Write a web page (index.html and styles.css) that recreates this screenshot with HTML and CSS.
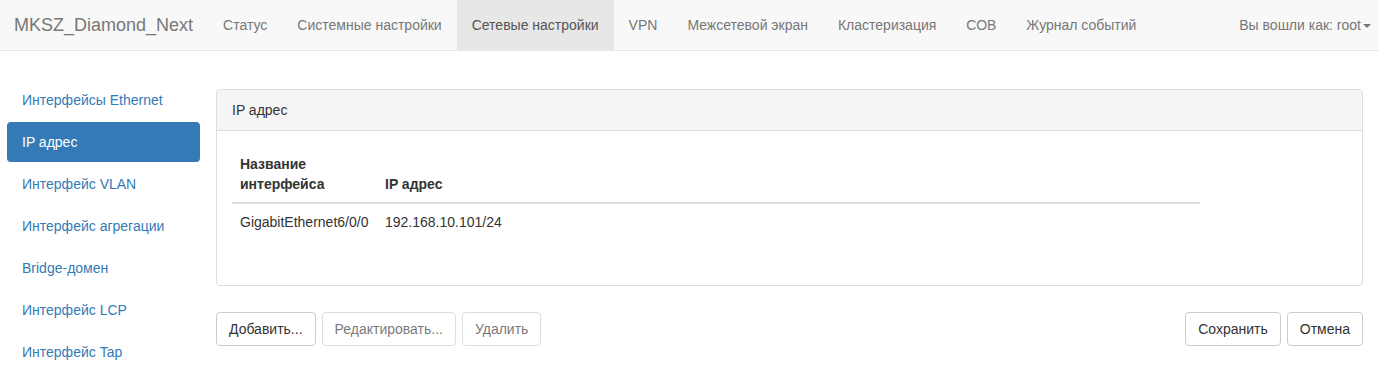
FILE: index.html
```html
<!DOCTYPE html>
<html lang="ru">
<head>
    <meta charset="UTF-8">
    <title>MKSZ_Diamond_Next</title>
    <link rel="stylesheet" href="styles.css">
</head>
<body>
    <nav class="navbar">
        <a class="brand" href="#">MKSZ_Diamond_Next</a>
        <ul class="nav-menu">
            <li><a href="#">Статус</a></li>
            <li><a href="#">Системные настройки</a></li>
            <li class="active"><a href="#">Сетевые настройки</a></li>
            <li><a href="#">VPN</a></li>
            <li><a href="#">Межсетевой экран</a></li>
            <li><a href="#">Кластеризация</a></li>
            <li><a href="#">СОВ</a></li>
            <li><a href="#">Журнал событий</a></li>
        </ul>
        <div class="nav-user">
            <a href="#">Вы вошли как: root<span class="caret"></span></a>
        </div>
    </nav>

    <div class="main">
        <!-- боковое меню -->
        <ul class="side-nav">
            <li><a href="#">Интерфейсы Ethernet</a></li>
            <li class="active"><a href="#">IP адрес</a></li>
            <li><a href="#">Интерфейс VLAN</a></li>
            <li><a href="#">Интерфейс агрегации</a></li>
            <li><a href="#">Bridge-домен</a></li>
            <li><a href="#">Интерфейс LCP</a></li>
            <li><a href="#">Интерфейс Tap</a></li>
        </ul>

        <div class="content">
            <div class="panel">
                <div class="panel-heading">IP адрес</div>
                <div class="panel-body">
                    <table class="table">
                        <thead>
                            <tr>
                                <th class="col-name">Название интерфейса</th>
                                <th class="col-ip">IP адрес</th>
                                <th></th>
                            </tr>
                        </thead>
                        <tbody>
                            <tr>
                                <td>GigabitEthernet6/0/0</td>
                                <td>192.168.10.101/24</td>
                                <td></td>
                            </tr>
                        </tbody>
                    </table>
                </div>
            </div>

            <div class="actions">
                <div class="btn-group">
                    <button class="btn">Добавить...</button>
                    <button class="btn" disabled>Редактировать...</button>
                    <button class="btn" disabled>Удалить</button>
                </div>
                <div class="btn-group">
                    <button class="btn">Сохранить</button>
                    <button class="btn">Отмена</button>
                </div>
            </div>
        </div>
    </div>
</body>
</html>
```

FILE: styles.css
```css
* {
    box-sizing: border-box;
}

body {
    margin: 0;
    font-family: "Liberation Sans", Arial, sans-serif;
    font-size: 14px;
    line-height: 20px;
    color: #333;
    background-color: #fff;
}

a {
    text-decoration: none;
}

ul {
    list-style: none;
    margin: 0;
    padding: 0;
}

/* верхнее меню */
.navbar {
    display: flex;
    align-items: stretch;
    height: 51px;
    padding: 0 0 0 14px;
    background-color: #f8f8f8;
    border-bottom: 1px solid #e7e7e7;
}

.brand {
    padding: 15px 15px 15px 0;
    font-size: 18px;
    line-height: 20px;
    color: #777;
}

.nav-menu {
    display: flex;
    flex: 1;
}

.nav-menu a,
.nav-user a {
    display: block;
    padding: 15px;
    color: #777;
}

.nav-menu .active a {
    background-color: #e7e7e7;
    color: #555;
}

.nav-user a {
    padding-right: 8px;
}

.caret {
    display: inline-block;
    width: 0;
    height: 0;
    margin-left: 2px;
    vertical-align: middle;
    border-top: 4px solid #777;
    border-left: 4px solid transparent;
    border-right: 4px solid transparent;
}

/* основная часть */
.main {
    display: flex;
    padding: 29px 16px 0 7px;
}

.side-nav {
    width: 193px;
    flex-shrink: 0;
}

.side-nav li + li {
    margin-top: 2px;
}

.side-nav a {
    display: block;
    padding: 10px 15px;
    color: #337ab7;
    border-radius: 4px;
}

.side-nav .active a {
    background-color: #337ab7;
    color: #fff;
}

.content {
    flex: 1;
    margin-left: 16px;
    padding-top: 9px;
}

.panel {
    border: 1px solid #ddd;
    border-radius: 4px;
    margin-bottom: 26px;
}

.panel-heading {
    padding: 10px 15px;
    background-color: #f5f5f5;
    border-bottom: 1px solid #ddd;
    border-radius: 3px 3px 0 0;
}

.panel-body {
    padding: 15px 15px 25px;
}

.table {
    width: 968px;
    border-collapse: collapse;
    margin-bottom: 20px;
}

.table th,
.table td {
    padding: 8px;
    text-align: left;
    vertical-align: top;
}

.table th {
    vertical-align: bottom;
    font-weight: bold;
    border-bottom: 2px solid #ddd;
}

.table td {
    border-top: 1px solid #ddd;
}

.col-name {
    width: 145px;
}

.col-ip {
    width: 140px;
}

.actions {
    display: flex;
    justify-content: space-between;
}

.btn-group {
    display: flex;
    gap: 6px;
}

.btn {
    padding: 6px 12px;
    font-family: inherit;
    font-size: 14px;
    line-height: 20px;
    color: #333;
    background-color: #fff;
    border: 1px solid #ccc;
    border-radius: 4px;
    cursor: pointer;
}

.btn:disabled {
    opacity: 0.65;
    cursor: not-allowed;
}
```
